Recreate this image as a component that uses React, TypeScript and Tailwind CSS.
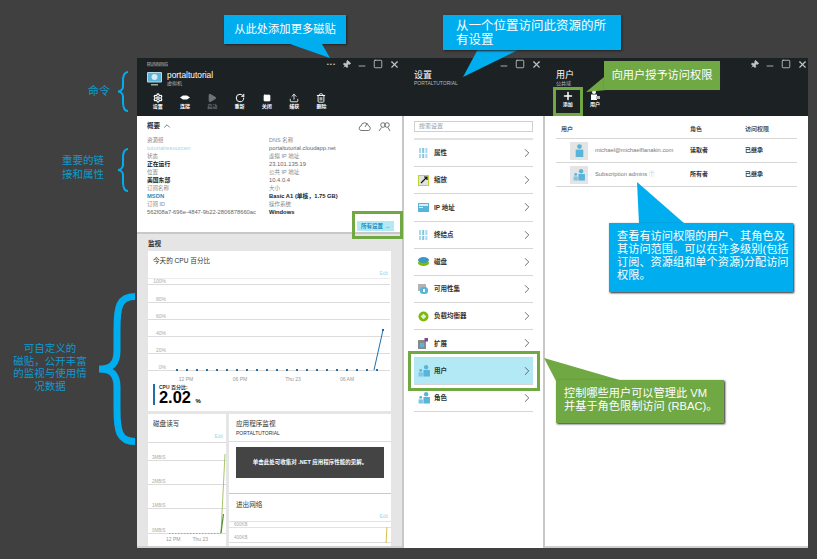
import { ChevronRight, ChevronUp, Minus, Pin, Play, Plus, RotateCw, Settings, Square, Trash2, Upload, X } from "lucide-react";
import type { ReactNode } from "react";

const FONT = "font-['Liberation_Sans','Noto_Sans_CJK_SC',sans-serif]";

function WindowButtons({ dots }: { dots?: boolean }) {
    return (
        <div className="flex items-center gap-[6px] text-[#c4c8c8]">
            {dots && <span className="text-[6px] leading-none tracking-[1px]">•••</span>}
            {dots !== undefined && <Pin size={9} className="rotate-45" fill="currentColor" />}
            <Minus size={10} strokeWidth={2} className="translate-y-[2px]" />
            <Square size={10} strokeWidth={2} />
            <X size={11} strokeWidth={2.4} />
        </div>
    );
}

function Cmd({ icon, label, dim }: { icon: ReactNode; label: string; dim?: boolean }) {
    return (
        <div className={`flex w-[27.3px] flex-col items-center ${dim ? "text-[#6f7476]" : "text-white"}`}>
            <div className="flex h-[11px] items-center">{icon}</div>
            <span className="text-[5px] leading-[7px] font-bold">{label}</span>
        </div>
    );
}

function Detail({ label, value, tone }: { label: string; value: string; tone?: "link" | "bold" | "linkBold" }) {
    const valueClass =
        tone === "link"
            ? "text-[#9bd6ee]"
            : tone === "linkBold"
              ? "font-bold text-[#1b8fc0]"
              : tone === "bold"
                ? "font-bold text-[#222]"
                : "text-[#666]";
    return (
        <div className="h-[16px]">
            <div className="text-[5.5px] leading-[7px] text-[#888]">{label}</div>
            <div className={`text-[5.8px] leading-[9px] whitespace-nowrap ${valueClass}`}>{value}</div>
        </div>
    );
}

function UsersIcon() {
    return (
        <svg width="13" height="12" viewBox="0 0 12 11">
            <circle cx="7.5" cy="2" r="2" fill="#59b4d9" />
            <rect x="5" y="4.6" width="6" height="6" fill="#59b4d9" />
            <circle cx="2.5" cy="5" r="1.3" fill="#59b4d9" />
            <rect x="0.5" y="6.8" width="4" height="3.8" fill="#7fc6e4" />
        </svg>
    );
}

function UserIcon() {
    return (
        <svg width="13" height="13" viewBox="0 0 12 12">
            <circle cx="6" cy="2.4" r="2.2" fill="#59b4d9" />
            <rect x="2.5" y="5.2" width="7" height="6.8" fill="#59b4d9" />
        </svg>
    );
}

const settingsRows: { label: string; icon: ReactNode }[] = [
    {
        label: "属性",
        icon: (
            <svg width="10" height="10" viewBox="0 0 10 10">
                <rect x="1" width="2" height="10" fill="#a9d8ec" />
                <rect x="4.2" width="2" height="10" fill="#7fc6e4" />
                <rect x="7.4" width="2" height="10" fill="#a9d8ec" />
                <rect y="5" width="10" height="1" fill="#fff" />
            </svg>
        ),
    },
    {
        label: "缩放",
        icon: (
            <svg width="11" height="11" viewBox="0 0 11 11">
                <rect x="0.5" y="0.5" width="10" height="10" fill="#e2e2e2" stroke="#b8d432" />
                <path d="M3 8 L8.5 2.5 M6 2 H9 V5" stroke="#111" strokeWidth="1.2" fill="none" />
            </svg>
        ),
    },
    {
        label: "IP 地址",
        icon: (
            <svg width="11" height="9" viewBox="0 0 11 9">
                <rect width="11" height="9" fill="#59b4d9" />
                <rect x="1" y="1" width="9" height="2" fill="#d8eef7" />
                <rect x="1" y="4" width="4" height="1" fill="#d8eef7" />
            </svg>
        ),
    },
    {
        label: "终结点",
        icon: (
            <svg width="10" height="10" viewBox="0 0 10 10">
                <rect x="1" width="2" height="10" fill="#a9d8ec" />
                <rect x="4.2" width="2" height="10" fill="#7fc6e4" />
                <rect x="7.4" width="2" height="10" fill="#a9d8ec" />
                <rect y="5" width="10" height="1" fill="#fff" />
            </svg>
        ),
    },
    {
        label: "磁盘",
        icon: (
            <svg width="11" height="9" viewBox="0 0 11 9">
                <ellipse cx="5.5" cy="6" rx="5.5" ry="3" fill="#7fba00" />
                <ellipse cx="5.5" cy="3" rx="5.5" ry="3" fill="#3999c6" />
            </svg>
        ),
    },
    {
        label: "可用性集",
        icon: (
            <svg width="10" height="10" viewBox="0 0 10 10">
                <rect width="8" height="7" fill="#b3b3b3" />
                <rect x="2" y="3" width="8" height="7" rx="3" fill="#59b4d9" />
                <rect x="5" y="5" width="2" height="3" fill="#fff" />
            </svg>
        ),
    },
    {
        label: "负载均衡器",
        icon: (
            <svg width="11" height="11" viewBox="0 0 11 11">
                <circle cx="5.5" cy="5.5" r="5" fill="#7fba00" />
                <rect x="3.5" y="3.5" width="4" height="4" fill="#d8eef7" transform="rotate(45 5.5 5.5)" />
            </svg>
        ),
    },
    {
        label: "扩展",
        icon: (
            <svg width="10" height="11" viewBox="0 0 10 11">
                <rect y="2" width="8" height="9" fill="#8a8a8a" />
                <rect x="2" y="5" width="4" height="4" fill="#59b4d9" />
                <rect x="6.5" width="3.5" height="3.5" fill="#804998" />
            </svg>
        ),
    },
    { label: "用户", icon: <UsersIcon /> },
    { label: "角色", icon: <UsersIcon /> },
];

function SettingsRow({ label, icon, active }: { label: string; icon: ReactNode; active: boolean }) {
    return (
        <div className={`flex h-[27.2px] items-center border-b border-[#d6d6d6] pl-[4px] ${active ? "bg-[#b3e8f5]" : ""}`}>
            <div className="flex w-[16px] items-center">{icon}</div>
            <span className="text-[6.5px] font-bold text-[#333]">{label}</span>
            <ChevronRight size={14} strokeWidth={1.2} className="mr-[-1px] ml-auto text-[#333]" />
        </div>
    );
}

function TileHead({ title, sub }: { title: string; sub?: string }) {
    return (
        <div className="px-[5px] pt-[5px]">
            <div className="text-[6.6px] leading-[10px] text-[#333]">{title}</div>
            {sub && <div className="text-[5px] leading-[8px] text-[#333]">{sub}</div>}
        </div>
    );
}

function CpuChart() {
    const dots = Array.from({ length: 21 }, (_, i) => 29 + i * 10);
    const grid = [
        { y: 6, label: "100%" },
        { y: 24, label: "80%" },
        { y: 41, label: "60%" },
        { y: 58, label: "40%" },
        { y: 75, label: "20%" },
        { y: 92, label: "0%" },
    ];
    return (
        <svg width="242" height="104" viewBox="0 0 242 104" className="block">
            <line x1="0" y1="0.5" x2="242" y2="0.5" stroke="#ececec" />
            {grid.map((g) => (
                <g key={g.y}>
                    <line x1="0" y1={g.y + 0.5} x2="242" y2={g.y + 0.5} stroke="#dcdcdc" />
                    <text x="18" y={g.y - 1} fontSize="5" fill="#aaa" textAnchor="end">
                        {g.label}
                    </text>
                </g>
            ))}
            {dots.map((x) => (
                <rect key={x} x={x - 1} y="91" width="2" height="2" fill="#1f6ea8" />
            ))}
            <path d="M226 92 L235 52" stroke="#1f6ea8" strokeWidth="1" fill="none" />
            <rect x="234" y="51" width="2" height="2" fill="#1f6ea8" />
            {[
                { x: 38, t: "12 PM" },
                { x: 92, t: "06 PM" },
                { x: 145, t: "Thu 23" },
                { x: 199, t: "06 AM" },
            ].map((l) => (
                <text key={l.t} x={l.x} y="103" fontSize="5" fill="#999" textAnchor="middle">
                    {l.t}
                </text>
            ))}
        </svg>
    );
}

function DiskChart() {
    return (
        <svg width="78" height="92" viewBox="0 0 78 92" className="block">
            {[
                { y: 18, t: "3MB/S" },
                { y: 42, t: "2MB/S" },
                { y: 66, t: "1MB/S" },
                { y: 91, t: "0MB/S" },
            ].map((g) => (
                <g key={g.y}>
                    <line x1="0" y1={g.y - 0.5} x2="78" y2={g.y - 0.5} stroke="#dcdcdc" />
                    <text x="4" y={g.y - 2} fontSize="4.5" fill="#aaa">
                        {g.t}
                    </text>
                </g>
            ))}
            <path d="M21 90.5 H73" stroke="#8ab04c" strokeWidth="0.8" strokeDasharray="1.5 1.5" />
            <path d="M73 90 L77 11" stroke="#a5c66a" strokeWidth="1" fill="none" />
            <path d="M73 90 L75.5 71" stroke="#4f8f2f" strokeWidth="1.2" fill="none" />
        </svg>
    );
}

function Brace({ className, w, h, stroke }: { className: string; w: number; h: number; stroke: number }) {
    const m = h / 2;
    const r = w / 2;
    const d = `M${w} ${stroke / 2} C${r + 2} ${stroke / 2} ${r} ${stroke * 2} ${r} ${w} V${m - w / 2} C${r} ${m - 2} ${r / 2} ${m} 0 ${m} C${r / 2} ${m} ${r} ${m + 2} ${r} ${m + w / 2} V${h - w} C${r} ${h - stroke * 2} ${r + 2} ${h - stroke / 2} ${w} ${h - stroke / 2}`;
    return (
        <svg width={w} height={h} viewBox={`0 0 ${w} ${h}`} className={className}>
            <path d={d} fill="none" stroke="#00aeef" strokeWidth={stroke} />
        </svg>
    );
}

function UsersGlyph() {
    return (
        <svg width="10" height="11" viewBox="0 0 10 11">
            <circle cx="4" cy="2" r="2" fill="currentColor" />
            <rect x="1" y="4.5" width="6" height="5.5" fill="currentColor" />
            <rect x="6" y="6" width="4" height="3" fill="#bbb" />
        </svg>
    );
}

function Avatar({ children }: { children: ReactNode }) {
    return <div className="flex h-[18px] w-[18px] shrink-0 items-center justify-center bg-[#e4e4e4]">{children}</div>;
}

function UserGrid({ user, role, access, head }: { user: ReactNode; role: string; access: string; head?: boolean }) {
    return (
        <div
            className={`grid grid-cols-[134px_55px_1fr] items-center border-b border-[#d6d6d6] text-[6px] ${head ? "h-[14px] pb-[4px] text-[5px] font-bold text-[#555]" : "h-[24px] font-bold text-[#333]"}`}
        >
            <div className={head ? "pl-[5px]" : "font-normal"}>{user}</div>
            <div>{role}</div>
            <div>{access}</div>
        </div>
    );
}

export default function App() {
    return (
        <div className={`relative h-[559px] w-[817px] overflow-hidden bg-[#404040] pt-[58px] pl-[137px] ${FONT}`}>
            <div className="flex h-[490px] w-[671px]">
                {/* vm blade */}
                <div className="flex w-[265px] shrink-0 flex-col border-b-2 border-[#cfcfcf] bg-[#e5e5e5]">
                    <div className="flex h-[58px] shrink-0 flex-col bg-[#1c2224] pt-[1px] pr-[2px] pl-[10px]">
                        <div className="flex h-[10px] items-center justify-between">
                            <span className="bg-[#333] text-[4.5px] leading-[5px] text-[#aaa]">RUNNING</span>
                            <WindowButtons dots />
                        </div>
                        <div className="mt-[2px] flex items-center gap-[5px]">
                            <svg width="15" height="14" viewBox="0 0 15 14">
                                <rect width="15" height="10.5" rx="1" fill="#b9d9e8" />
                                <rect x="1" y="1" width="13" height="8.5" fill="#59b4d9" />
                                <circle cx="7.5" cy="5" r="3" fill="#d3ecf6" />
                                <rect x="4" y="12" width="7" height="1.5" fill="#9aa" />
                            </svg>
                            <div>
                                <div className="text-[8.4px] leading-[9px] text-white">portaltutorial</div>
                                <div className="text-[5px] leading-[7px] text-[#b5b9b9]">虚拟机</div>
                            </div>
                        </div>
                        <div className="mt-[5px] -ml-[3px] flex">
                            <Cmd icon={<Settings size={10} strokeWidth={3} />} label="设置" />
                            <Cmd
                                icon={
                                    <svg width="10" height="5" viewBox="0 0 10 5">
                                        <path d="M0 2.5 L3 0.5 H7 L10 2.5 L7 4.5 H3 Z" fill="currentColor" />
                                    </svg>
                                }
                                label="连接"
                            />
                            <Cmd icon={<Play size={10} fill="currentColor" />} label="启动" dim />
                            <Cmd icon={<RotateCw size={10} strokeWidth={2.4} />} label="重新" />
                            <Cmd icon={<Square size={8} fill="currentColor" />} label="关闭" />
                            <Cmd icon={<Upload size={10} strokeWidth={2} />} label="捕获" />
                            <Cmd icon={<Trash2 size={10} strokeWidth={2.2} />} label="删除" />
                        </div>
                    </div>

                    <div className="h-[118px] shrink-0 border-b-[2px] border-[#c8c8c8] bg-white pt-[5px] pl-[10px]">
                        <div className="flex items-center justify-between pr-[11px]">
                            <div className="flex items-center gap-[2px] text-[6.6px] font-bold text-[#333]">
                                概要 <ChevronUp size={10} strokeWidth={1.5} />
                            </div>
                            <div className="flex gap-[7px] text-[#555]">
                                <svg width="13" height="9" viewBox="0 0 13 9" fill="none" stroke="currentColor" strokeWidth="0.8">
                                    <path d="M3 8.5 H10.5 A2.3 2.3 0 0 0 10.5 4 A3.8 3.8 0 0 0 3 4 A2.3 2.3 0 0 0 3 8.5 Z M7 5 L9 1.5" />
                                </svg>
                                <svg width="13" height="9" viewBox="0 0 13 9" fill="none" stroke="currentColor" strokeWidth="0.8">
                                    <circle cx="5" cy="3" r="2.3" />
                                    <circle cx="9" cy="3" r="2.3" />
                                    <path d="M1 9 L3.5 5.5 M12 9 L10 5.5" />
                                </svg>
                            </div>
                        </div>
                        <div className="mt-[6px] flex">
                            <div className="w-[122px]">
                                <Detail label="资源组" value="tutorialresourcen" tone="link" />
                                <Detail label="状态" value="正在运行" tone="bold" />
                                <Detail label="位置" value="美国东部" tone="bold" />
                                <Detail label="订阅名称" value="MSDN" tone="linkBold" />
                                <Detail label="订阅 ID" value="562f08a7-696e-4847-9b22-2806878660ac" />
                            </div>
                            <div>
                                <Detail label="DNS 名称" value="portaltutorial.cloudapp.net" />
                                <Detail label="虚拟 IP 地址" value="23.101.135.19" />
                                <Detail label="公共 IP 地址" value="10.4.0.4" />
                                <Detail label="大小" value="Basic A1 (单核，1.75 GB)" tone="bold" />
                                <Detail label="操作系统" value="Windows" tone="bold" />
                            </div>
                        </div>
                    </div>

                    <div className="flex min-h-0 flex-1 flex-col overflow-hidden px-[11px] pt-[5px]">
                        <div className="text-[6.6px] leading-[10px] font-bold text-[#333]">监视</div>
                        <div className="mt-[2px] h-[160px] shrink-0 bg-white">
                            <TileHead title="今天的 CPU 百分比" />
                            <div className="mt-[4px] pr-[3px] text-right text-[5px] leading-[7px] text-[#9fd8ee]">Edit</div>
                            <div className="mt-[1px]">
                                <CpuChart />
                            </div>
                            <div className="mt-[2px] ml-[5px] flex h-[21px] border-l-[2px] border-[#1f6ea8] pl-[4px]">
                                <div>
                                    <div className="text-[5px] leading-[6px] font-bold text-[#333]">CPU 百分比:</div>
                                    <div className="text-[16.4px] leading-[15px] font-bold text-black">
                                        2.02 <span className="text-[6px] font-bold">%</span>
                                    </div>
                                </div>
                            </div>
                        </div>
                        <div className="mt-[3px] flex min-h-0 flex-1 gap-[3px]">
                            <div className="h-[133px] w-[78px] shrink-0 bg-white">
                                <TileHead title="磁盘读写" />
                                <div className="mt-[4px] border-b border-[#dcdcdc] pr-[3px] pb-[2px] text-right text-[5px] leading-[7px] text-[#9fd8ee]">
                                    Edit
                                </div>
                                <DiskChart />
                                <div className="flex justify-center gap-[12px] text-[5px] leading-[8px] text-[#999]">
                                    <span>12 PM</span>
                                    <span>Thu 23</span>
                                </div>
                            </div>
                            <div className="flex min-w-0 flex-1 flex-col">
                                <div className="h-[80px] shrink-0 border-b border-[#c8c8c8] bg-white">
                                    <div className="h-[28px] border-b border-[#dcdcdc] pl-[2px]">
                                        <TileHead title="应用程序监视" sub="PORTALTUTORIAL" />
                                    </div>
                                    <div className="mx-[7px] mt-[5px] flex h-[31px] items-center justify-center bg-[#444] text-[5.5px] font-bold text-white">
                                        单击此处可收集对 .NET 应用程序性能的见解。
                                    </div>
                                </div>
                                <div className="flex-1 bg-white">
                                    <div className="pt-[1px] pl-[2px]">
                                        <TileHead title="进出网络" />
                                    </div>
                                    <div className="relative">
                                        <div className="mt-[3px] pr-[3px] text-right text-[5px] leading-[7px] text-[#9fd8ee]">Edit</div>
                                        <div className="mt-[1px] h-[7px] border-y border-[#e2e2e2] pl-[5px] text-[4.5px] leading-[5px] text-[#aaa]">
                                            600KB
                                        </div>
                                        <div className="relative mt-[7px] h-[8px] border-b border-[#dcdcdc] pl-[5px] text-[4.5px] leading-[6px] text-[#aaa]">
                                            400KB
                                            <span className="absolute right-[4px] -top-[8px] h-[16px] w-[1px] rotate-3 bg-[#d6c04a]" />
                                        </div>
                                    </div>
                                </div>
                            </div>
                        </div>
                    </div>
                </div>

                {/* settings blade */}
                <div className="flex w-[143px] shrink-0 flex-col border-r-2 border-l-2 border-[#c8c8c8] bg-white">
                    <div className="-mx-[2px] flex h-[58px] shrink-0 flex-col bg-[#1c2224] pt-[1px] pr-[3px] pl-[12px]">
                        <div className="flex h-[10px] items-center justify-end">
                            <WindowButtons />
                        </div>
                        <div className="mt-[1px] text-[9px] leading-[10px] text-white">设置</div>
                        <div className="text-[5px] leading-[7px] text-[#b5b9b9]">PORTALTUTORIAL</div>
                    </div>
                    <div className="px-[10px] pt-[5px]">
                        <div className="flex h-[11px] items-center border border-[#d0d0d0] pl-[4px] text-[6px] text-[#999]">
                            搜索设置
                        </div>
                        <div className="mt-[6px] border-t-2 border-[#e2e2e2]">
                            {settingsRows.map((row) => (
                                <SettingsRow key={row.label} label={row.label} icon={row.icon} active={row.label === "用户"} />
                            ))}
                        </div>
                    </div>
                </div>

                {/* users blade */}
                <div className="flex flex-1 flex-col border-b-2 border-[#cfcfcf] bg-white">
                    <div className="flex h-[58px] shrink-0 flex-col bg-[#1c2224] pt-[1px] pl-[11px]">
                        <div className="flex h-[10px] items-center justify-end">
                            <WindowButtons dots={false} />
                        </div>
                        <div className="mt-[1px] text-[9px] leading-[10px] text-white">用户</div>
                        <div className="text-[5px] leading-[7px] text-[#b5b9b9]">公共域</div>
                        <div className="mt-[3px] -ml-[2px] flex">
                            <Cmd icon={<Plus size={12} strokeWidth={3} />} label="添加" />
                            <Cmd icon={<UsersGlyph />} label="用户" />
                        </div>
                    </div>
                    <div className="px-[11px] pt-[9px]">
                        <UserGrid head user="用户" role="角色" access="访问权限" />
                        <UserGrid
                            user={
                                <div className="flex items-center gap-[7px] pl-[14px]">
                                    <Avatar>
                                        <UserIcon />
                                    </Avatar>
                                    <span className="text-[5.8px] text-[#777]">michael@michaelflanakin.com</span>
                                </div>
                            }
                            role="读取者"
                            access="已继承"
                        />
                        <UserGrid
                            user={
                                <div className="flex items-center gap-[7px] pl-[14px]">
                                    <Avatar>
                                        <UsersIcon />
                                    </Avatar>
                                    <span className="text-[5.8px] text-[#777]">
                                        Subscription admins <span className="text-[#bbb]">⑦</span>
                                    </span>
                                </div>
                            }
                            role="所有者"
                            access="已继承"
                        />
                    </div>
                </div>
            </div>

            {/* annotations */}
            <div className="absolute top-[15px] left-[224px] flex h-[29px] w-[122px] items-center justify-center bg-[#00aeef] text-[11.3px] text-white shadow-[1px_1px_2px_#222]">
                从此处添加更多磁贴
            </div>
            <svg width="817" height="559" viewBox="0 0 817 559" className="pointer-events-none absolute top-0 left-0">
                <polygon points="290,44 330,58 322,44" fill="#00aeef" />
                <polygon points="478,49 463,77 520,49" fill="#00aeef" />
                <polygon points="604,77 586,92 607,90" fill="#70a844" />
                <polygon points="637,182 639,224 685,224" fill="#00aeef" />
                <polygon points="544,358 556,381 623,381" fill="#70a844" />
                <rect x="353.5" y="212.5" width="48" height="25" fill="none" stroke="#70a844" strokeWidth="3" />
                <rect x="409.5" y="352.5" width="129" height="37" fill="none" stroke="#70a844" strokeWidth="3" />
                <rect x="554.5" y="88.5" width="27" height="26" fill="none" stroke="#70a844" strokeWidth="3" />
            </svg>
            <div className="absolute top-[221px] left-[357px] flex h-[10px] w-[37px] items-center justify-center bg-[#b3e8f5] text-[5.5px] font-bold text-[#1b8fc0]">
                所有设置 →
            </div>
            <div className="absolute top-[15px] left-[443px] h-[35px] w-[178px] bg-[#00aeef] pt-[4px] pl-[13px] text-[12.5px] leading-[14px] text-white shadow-[1px_1px_2px_#222]">
                从一个位置访问此资源的所
                <br />
                有设置
            </div>
            <div className="absolute top-[61px] left-[604px] flex h-[29px] w-[116px] items-center justify-center bg-[#70a844] text-[11.2px] text-white shadow-[1px_1px_2px_#222]">
                向用户授予访问权限
            </div>
            <div className="absolute top-[223px] left-[609px] h-[69px] w-[184px] bg-[#00aeef] pt-[7px] pl-[8px] text-[11.2px] leading-[13px] whitespace-nowrap text-white shadow-[1px_1px_2px_#222]">
                查看有访问权限的用户、其角色及
                <br />
                其访问范围。可以在许多级别(包括
                <br />
                订阅、资源组和单个资源)分配访问
                <br />
                权限。
            </div>
            <div className="absolute top-[380px] left-[556px] h-[43px] w-[168px] bg-[#70a844] pt-[7px] pl-[8px] text-[11.2px] leading-[13px] text-white shadow-[1px_1px_2px_#222]">
                控制哪些用户可以管理此 VM
                <br />
                并基于角色限制访问 (RBAC)。
            </div>

            <div className="absolute top-[83px] left-[88px] text-[11px] leading-[16px] text-[#0b9bd0]">命令</div>
            <Brace className="absolute top-[71px] left-[118px]" w={10} h={41} stroke={2} />
            <div className="absolute top-[153px] left-[58px] w-[50px] text-center text-[10.5px] leading-[14px] text-[#0b9bd0]">
                重要的链
                <br />
                接和属性
            </div>
            <Brace className="absolute top-[148px] left-[118px]" w={10} h={44} stroke={2} />
            <div className="absolute top-[342px] left-[8px] w-[84px] text-center text-[10.5px] leading-[12.7px] text-[#0b9bd0]">
                可自定义的
                <br />
                磁贴，公开丰富
                <br />
                的监视与使用情
                <br />
                况数据
            </div>
            <Brace className="absolute top-[293px] left-[99px]" w={36} h={152} stroke={7} />
        </div>
    );
}
